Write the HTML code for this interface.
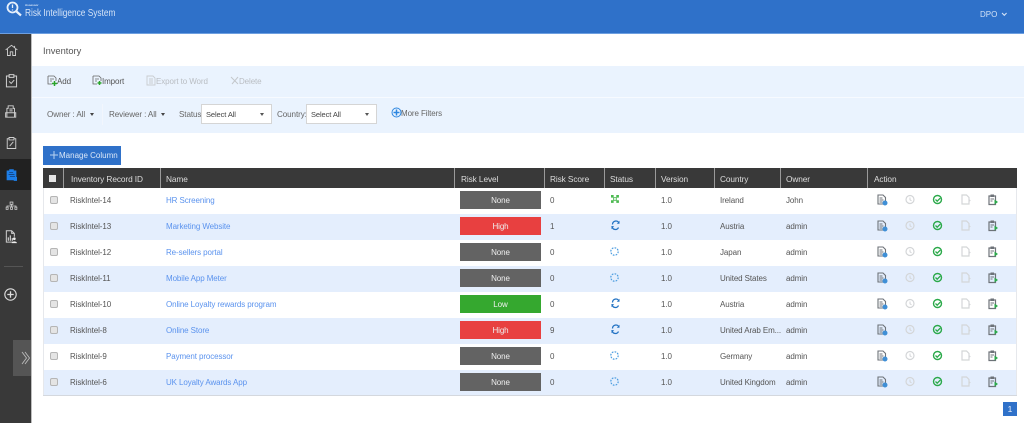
<!DOCTYPE html>
<html><head><meta charset="utf-8"><style>
html,body{margin:0;padding:0;width:1024px;height:423px;overflow:hidden;background:#fff}
body{font-family:"Liberation Sans",sans-serif;font-size:8px;letter-spacing:-.1px;color:#555;position:relative;filter:blur(.35px)}
.a{position:absolute;white-space:nowrap}
.t{position:absolute;white-space:nowrap;line-height:12px;margin-top:1px}
.th{color:#ddd;font-size:8.3px;top:172px}
.sep{position:absolute;top:168px;height:20px;width:1px;background:#9a9a9a}
.row{position:absolute;left:43px;width:974px;height:26px}
.row.b{background:#e4eefd}
.cb{position:absolute;left:50px;width:6px;height:6px;background:#e4e4e4;border:1px solid #b5b5b5;border-radius:2px}
.risk{position:absolute;left:460px;width:81px;height:18px;line-height:20px;text-align:center;color:#eee;font-size:8px}
.n{background:#636363}.h{background:#e84040}.l{background:#35a82f}
.lnk{color:#5b93ee;left:166px}
.sel{position:absolute;top:104px;height:20px;background:#fff;border:1px solid #d5d5d5;box-sizing:border-box;font-size:7.5px;color:#444;line-height:19px;padding-left:4px}
.sel i{position:absolute;right:7px;top:8px;border:2.2px solid transparent;border-top:3px solid #555;border-bottom:0}
.car{position:absolute;top:113px;border:2.5px solid transparent;border-top:3px solid #444;border-bottom:0}
.tb{font-size:8px}
.fl{font-size:8.1px;color:#666;top:109px;margin-top:0}
svg{position:absolute;overflow:visible}
svg[width="1"]{margin-top:-1px}
</style></head><body>

<div class="a" style="left:0;top:0;width:1024px;height:33px;background:#2f71c9"></div>
<div class="a" style="left:0;top:33px;width:1024px;height:1px;background:#6d9fe0"></div>
<svg style="left:6px;top:1px" width="20" height="18" fill="none"><circle cx="6.500" cy="6.500" r="5" stroke="#e8f0fb" stroke-width="1.800"/><path d="M10.500 10.500l4.500 4" stroke="#e8f0fb" stroke-width="2.200"/><path d="M6.500 3.500v3.500M6.500 8.500v1" stroke="#e8f0fb" stroke-width="1.300"/></svg>
<div class="t" style="left:25px;top:-2px;font-size:3px;letter-spacing:0;color:#dce8f8;font-weight:bold">Assessor</div>
<div class="t" style="left:25px;top:6px;font-size:10.500px;letter-spacing:0;color:#d6e4f7;transform:scaleX(.79);transform-origin:left">Risk Intelligence System</div>
<div class="t" style="left:980px;top:8px;font-size:8px;letter-spacing:0;color:#d3e2f6">DPO</div>
<svg style="left:1001px;top:12px" width="7" height="5" fill="none"><path d="M1 1l2.300 2.300L5.600 1" stroke="#d3e2f6" stroke-width="1.100"/></svg>

<div class="a" style="left:0;top:34px;width:31px;height:389px;background:#393939"></div>
<div class="a" style="left:31px;top:34px;width:1px;height:389px;background:#bdbdbd"></div>
<div class="a" style="left:0;top:159px;width:31px;height:31px;background:#212121"></div>
<svg style="left:5px;top:44px" width="13" height="12.500" viewBox="0 0 21 20" fill="none" stroke="#cfcfcf" stroke-width="1.500"><path d="M1 9.500L10.500 2 20 9.500M4 8v10.500h4.500v-6h4v6H17V8M15.500 3v3"/></svg>
<svg style="left:5px;top:74px" width="13" height="13.500" viewBox="0 0 19 20" fill="none" stroke="#cfcfcf" stroke-width="1.500"><path d="M6 3H2v16h15V3h-4M6 1h7v4H6zM6 11l3 3 4.500-5"/></svg>
<svg style="left:5px;top:105px" width="12" height="13" viewBox="0 0 19 20" fill="none" stroke="#cfcfcf" stroke-width="1.500"><path d="M3 19V5h2V1h8v4h2v14zM1 12h16v7H1zM7 9h5M7 6h5"/></svg>
<svg style="left:6px;top:136px" width="11" height="14" viewBox="0 0 18 20" fill="none" stroke="#cfcfcf" stroke-width="1.500"><path d="M5 3H2v16h14V3h-3M5 1h8v4H5zM6 15l6-7"/></svg>
<svg style="left:6px;top:168px" width="11" height="13.500" viewBox="0 0 17 19"><path d="M1 3h4V1h7v2h4v15H1z" fill="#1d7ee8"/><path d="M5 6h6M4 9h9M6 12h8" stroke="#123f78" stroke-width="1.200"/><path d="M12 13h5v6h-5z" fill="#1d7ee8"/></svg>
<svg style="left:5px;top:200px" width="13" height="12" viewBox="0 0 23 16" fill="none" stroke="#cfcfcf" stroke-width="1.400"><path d="M9 1h5v4H9zM11.500 5v3M3.500 10V8h16v2M11.500 8v2M2 10h3.500v4H2zM9.800 10h3.500v4H9.800zM17.500 10H21v4h-3.500z"/></svg>
<svg style="left:5px;top:230px" width="12" height="13.500" viewBox="0 0 18 20" fill="none" stroke="#cfcfcf" stroke-width="1.500"><path d="M12 18H2V1h8l4 4v5M10 1v4h4"/><path d="M5 16v-5M8 16V8M11 16v-4" stroke-width="1.800"/><circle cx="14" cy="13" r="2" fill="#eee" stroke="none"/><path d="M10 19.500c.5-3.500 7.500-3.500 8 0z" fill="#eee" stroke="none"/></svg>
<div class="a" style="left:4px;top:266px;width:19px;height:1px;background:#555"></div>
<svg style="left:4px;top:287px" width="15" height="15" fill="none" stroke="#ddd"><circle cx="6.500" cy="7.500" r="5.700" stroke-width="1.100"/><path d="M6.500 4.300v6.400M3.300 7.500h6.400" stroke-width="1.300"/></svg>
<div class="a" style="left:13px;top:340px;width:18px;height:36px;background:#555"></div>
<svg style="left:21px;top:351px" width="10" height="14" fill="none" stroke="#bbb" stroke-width=".9"><path d="M1 1l4.500 6L1 13M4 1l4.500 6L4 13"/></svg>

<div class="t" style="left:43px;top:44px;font-size:9.300px;letter-spacing:0;color:#555">Inventory</div>

<div class="a" style="left:32px;top:66px;width:992px;height:67px;background:#eaf3fe"></div>
<div class="a" style="left:32px;top:97px;width:992px;height:1px;background:#f7faff"></div>

<svg style="left:47px;top:75px" width="11" height="12" fill="none" stroke="#666" stroke-width=".8"><path d="M1 1h6l2 2v3M1 1v8h4M3 4h4M3 6h2"/><path d="M7.500 6v5M5 8.500h5" stroke="#2aa52a" stroke-width="1.500"/></svg>
<div class="t tb" style="left:57px;top:75px;color:#555">Add</div>
<svg style="left:92px;top:75px" width="11" height="12" fill="none" stroke="#666" stroke-width=".8"><path d="M1 1h6l2 2v3M1 1v8h4M3 4h4M3 6h2"/><path d="M7.500 6v4M5.500 8h4" stroke="#2aa52a" stroke-width="1.500"/></svg>
<div class="t tb" style="left:102px;top:75px;color:#555">Import</div>
<svg style="left:146px;top:75px" width="11" height="12" fill="none" stroke="#c9ccd0" stroke-width=".9"><path d="M1 1h6l2 2v7H1zM3 4h4M3 6h4M3 8h4"/></svg>
<div class="t tb" style="left:156px;top:75px;color:#b9bdc2">Export to Word</div>
<svg style="left:230px;top:76px" width="9" height="9" fill="none" stroke="#c4c7cb"><path d="M1 1l7 7M8 1L2 8"/></svg>
<div class="t tb" style="left:239px;top:75px;color:#b9bdc2">Delete</div>

<div class="t fl" style="left:47px">Owner : All</div>
<div class="car" style="left:90px"></div>
<div class="a" style="left:102px;top:104px;width:1px;height:21px;background:#f2f6fd"></div>
<div class="t fl" style="left:109px">Reviewer : All</div>
<div class="car" style="left:161px"></div>
<div class="t fl" style="left:179px">Status:</div>
<div class="sel" style="left:201px;width:71px">Select All<i></i></div>
<div class="t fl" style="left:277px">Country:</div>
<div class="sel" style="left:306px;width:71px">Select All<i></i></div>
<svg style="left:391px;top:107px" width="11" height="11" fill="none" stroke="#2c86e0"><circle cx="5.500" cy="5.500" r="4.500" stroke-width="1"/><path d="M5.500 2.500v6M2.500 5.500h6" stroke-width="1.500"/></svg>
<div class="t" style="left:401px;top:107px;color:#666">More Filters</div>

<div class="a" style="left:43px;top:146px;width:78px;height:19px;background:#2f71c9"></div>
<svg style="left:50px;top:150px" width="8" height="10" fill="none" stroke="#b9d2f1"><path d="M4 1v8M0 5h8"/></svg>
<div class="t" style="left:59px;top:149px;font-size:8px;letter-spacing:0;color:#dbe7f7">Manage Column</div>

<div class="a" style="left:43px;top:168px;width:974px;height:20px;background:#393939"></div>
<div class="a" style="left:49px;top:175px;width:7px;height:7px;background:#e6e6e6"></div>
<div class="sep" style="left:63px"></div><div class="sep" style="left:160px"></div><div class="sep" style="left:454px"></div><div class="sep" style="left:544px"></div><div class="sep" style="left:604px"></div><div class="sep" style="left:655px"></div><div class="sep" style="left:714px"></div><div class="sep" style="left:780px"></div><div class="sep" style="left:867px"></div>
<div class="t th" style="left:71px">Inventory Record ID</div>
<div class="t th" style="left:166px">Name</div>
<div class="t th" style="left:461px">Risk Level</div>
<div class="t th" style="left:550px">Risk Score</div>
<div class="t th" style="left:610px">Status</div>
<div class="t th" style="left:661px">Version</div>
<div class="t th" style="left:720px">Country</div>
<div class="t th" style="left:786px">Owner</div>
<div class="t th" style="left:874px">Action</div>

<svg width="0" height="0" style="left:0;top:0"><defs>
<g id="ic" fill="none"><g transform="translate(877,0)"><path d="M1 1h5l2.500 2.500V10H1zM2.500 4h3M2.500 6h4M2.500 8h3" stroke="#6d7278" stroke-width="1.100"/><circle cx="8" cy="9" r="2.500" fill="#3f8fd6"/></g>
<g transform="translate(905,0)"><circle cx="5" cy="5.500" r="4" stroke="#d4d6d8" stroke-width="1.200"/><path d="M5 3.500v2.300l1.500 1" stroke="#d4d6d8" stroke-width="1"/></g>
<g transform="translate(933,0)"><circle cx="4.500" cy="5.500" r="4" stroke="#2ba94a" stroke-width="1.400"/><path d="M2.500 5.500l1.700 1.700 3-3" stroke="#2ba94a" stroke-width="1.300"/></g>
<g transform="translate(961,0)"><path d="M1 1h4.500L8 3.500V10H1z" stroke="#d4d6d8" stroke-width="1.200"/><path d="M8 5l1.800 1.500L8 8" fill="#d4d6d8"/></g>
<g transform="translate(988,0)"><path d="M1 2h6.500v8.500H1z" stroke="#6d7278" stroke-width="1.200"/><path d="M2.500 .5h3.500v2.500H2.500z" fill="#6d7278"/><path d="M2.500 5h3.500M2.500 7h2" stroke="#6d7278" stroke-width="1"/><path d="M6.500 5.500l3.500 2.500-3.500 2.500z" fill="#2ba94a"/></g></g>
<g id="sq" transform="scale(.88)"><path d="M0 0h3v3H0zM6 0h3v3H6zM0 6h3v3H0zM6 6h3v3H6zM2.500 2.500h4v4h-4z" fill="#4ab84f"/><path d="M3.500 3.500h2v2h-2z" fill="#fff"/></g>
<g id="rf" fill="none" stroke="#2272c3" stroke-width="1.300"><path d="M8 3A3.400 3.400 0 0 0 1.500 4.500M1 6a3.400 3.400 0 0 0 6.500 1.500"/><path d="M8.500 .8v3H5.800zM.5 9.200v-3h2.700z" fill="#2272c3" stroke="none"/></g>
<g id="sp" fill="none" stroke="#4a9ce0" stroke-width="1.200"><circle cx="4.500" cy="4.500" r="3.700" stroke-dasharray="1.700 1.200"/></g>
</defs></svg>

<div class="row" style="top:188px"></div>
<div class="row b" style="top:214px"></div>
<div class="row" style="top:240px"></div>
<div class="row b" style="top:266px"></div>
<div class="row" style="top:292px"></div>
<div class="row b" style="top:318px"></div>
<div class="row" style="top:344px"></div>
<div class="row b" style="top:370px"></div>
<div class="a" style="left:43px;top:395px;width:974px;height:1px;background:#d4d8de"></div>
<div class="a" style="left:43px;top:188px;width:1px;height:207px;background:#e6e8ec"></div>
<div class="a" style="left:1016px;top:188px;width:1px;height:207px;background:#e6e8ec"></div>

<div class="cb" style="top:196px"></div><div class="t" style="left:70px;top:194px">RiskIntel-14</div><div class="t lnk" style="top:194px">HR Screening</div><div class="risk n" style="top:191px">None</div><div class="t" style="left:550px;top:194px">0</div><svg style="left:611px;top:195px" width="10" height="10"><use href="#sq"/></svg><div class="t" style="left:661px;top:194px">1.0</div><div class="t" style="left:720px;top:194px">Ireland</div><div class="t" style="left:786px;top:194px">John</div><svg style="left:0;top:195px" width="1" height="1"><use href="#ic"/></svg>

<div class="cb" style="top:222px"></div><div class="t" style="left:70px;top:220px">RiskIntel-13</div><div class="t lnk" style="top:220px">Marketing Website</div><div class="risk h" style="top:217px">High</div><div class="t" style="left:550px;top:220px">1</div><svg style="left:611px;top:220px" width="10" height="10"><use href="#rf"/></svg><div class="t" style="left:661px;top:220px">1.0</div><div class="t" style="left:720px;top:220px">Austria</div><div class="t" style="left:786px;top:220px">admin</div><svg style="left:0;top:221px" width="1" height="1"><use href="#ic"/></svg>

<div class="cb" style="top:248px"></div><div class="t" style="left:70px;top:246px">RiskIntel-12</div><div class="t lnk" style="top:246px">Re-sellers portal</div><div class="risk n" style="top:243px">None</div><div class="t" style="left:550px;top:246px">0</div><svg style="left:610px;top:247px" width="10" height="10"><use href="#sp"/></svg><div class="t" style="left:661px;top:246px">1.0</div><div class="t" style="left:720px;top:246px">Japan</div><div class="t" style="left:786px;top:246px">admin</div><svg style="left:0;top:247px" width="1" height="1"><use href="#ic"/></svg>

<div class="cb" style="top:274px"></div><div class="t" style="left:70px;top:272px">RiskIntel-11</div><div class="t lnk" style="top:272px">Mobile App Meter</div><div class="risk n" style="top:269px">None</div><div class="t" style="left:550px;top:272px">0</div><svg style="left:610px;top:273px" width="10" height="10"><use href="#sp"/></svg><div class="t" style="left:661px;top:272px">1.0</div><div class="t" style="left:720px;top:272px">United States</div><div class="t" style="left:786px;top:272px">admin</div><svg style="left:0;top:273px" width="1" height="1"><use href="#ic"/></svg>

<div class="cb" style="top:300px"></div><div class="t" style="left:70px;top:298px">RiskIntel-10</div><div class="t lnk" style="top:298px">Online Loyalty rewards program</div><div class="risk l" style="top:295px">Low</div><div class="t" style="left:550px;top:298px">0</div><svg style="left:611px;top:298px" width="10" height="10"><use href="#rf"/></svg><div class="t" style="left:661px;top:298px">1.0</div><div class="t" style="left:720px;top:298px">Austria</div><div class="t" style="left:786px;top:298px">admin</div><svg style="left:0;top:299px" width="1" height="1"><use href="#ic"/></svg>

<div class="cb" style="top:326px"></div><div class="t" style="left:70px;top:324px">RiskIntel-8</div><div class="t lnk" style="top:324px">Online Store</div><div class="risk h" style="top:321px">High</div><div class="t" style="left:550px;top:324px">9</div><svg style="left:611px;top:324px" width="10" height="10"><use href="#rf"/></svg><div class="t" style="left:661px;top:324px">1.0</div><div class="t" style="left:720px;top:324px">United Arab Em...</div><div class="t" style="left:786px;top:324px">admin</div><svg style="left:0;top:325px" width="1" height="1"><use href="#ic"/></svg>

<div class="cb" style="top:352px"></div><div class="t" style="left:70px;top:350px">RiskIntel-9</div><div class="t lnk" style="top:350px">Payment processor</div><div class="risk n" style="top:347px">None</div><div class="t" style="left:550px;top:350px">0</div><svg style="left:610px;top:351px" width="10" height="10"><use href="#sp"/></svg><div class="t" style="left:661px;top:350px">1.0</div><div class="t" style="left:720px;top:350px">Germany</div><div class="t" style="left:786px;top:350px">admin</div><svg style="left:0;top:351px" width="1" height="1"><use href="#ic"/></svg>

<div class="cb" style="top:378px"></div><div class="t" style="left:70px;top:376px">RiskIntel-6</div><div class="t lnk" style="top:376px">UK Loyalty Awards App</div><div class="risk n" style="top:373px">None</div><div class="t" style="left:550px;top:376px">0</div><svg style="left:610px;top:377px" width="10" height="10"><use href="#sp"/></svg><div class="t" style="left:661px;top:376px">1.0</div><div class="t" style="left:720px;top:376px">United Kingdom</div><div class="t" style="left:786px;top:376px">admin</div><svg style="left:0;top:377px" width="1" height="1"><use href="#ic"/></svg>

<div class="a" style="left:1003px;top:402px;width:14px;height:14px;background:#2f71c9;color:#e6effa;font-size:8.500px;line-height:14px;text-align:center">1</div>
</body></html>
